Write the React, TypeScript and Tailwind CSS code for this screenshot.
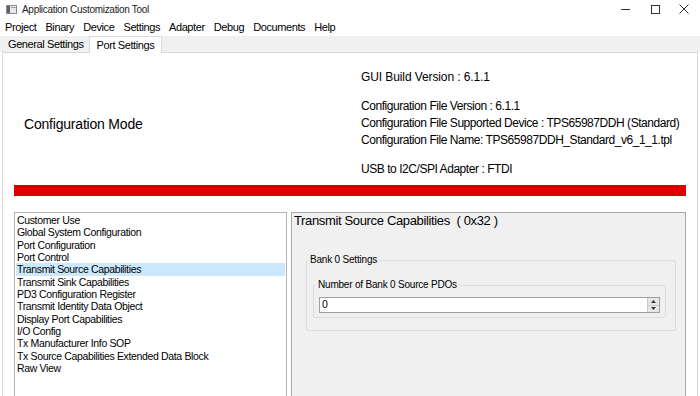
import React from 'react'

const MENU = ['Project', 'Binary', 'Device', 'Settings', 'Adapter', 'Debug', 'Documents', 'Help']

const PAGES = [
  'Customer Use',
  'Global System Configuration',
  'Port Configuration',
  'Port Control',
  'Transmit Source Capabilities',
  'Transmit Sink Capabilities',
  'PD3 Configuration Register',
  'Transmit Identity Data Object',
  'Display Port Capabilities',
  'I/O Config',
  'Tx Manufacturer Info SOP',
  'Tx Source Capabilities Extended Data Block',
  'Raw View',
]

const SELECTED = 'Transmit Source Capabilities'

function AppIcon() {
  return (
    <svg width="11" height="9" viewBox="0 0 11 9">
      <rect x="0.5" y="0.5" width="10" height="8" fill="#e8e8e8" stroke="#8a8a8a" />
      <rect x="1" y="1" width="3" height="7" fill="#5a6470" />
      <rect x="5" y="2" width="5" height="1" fill="#9aa4b0" />
    </svg>
  )
}

export default function App() {
  return (
    <div className="w-[700px] h-[396px] overflow-hidden bg-white flex flex-col text-black" style={{ fontFamily: '"Liberation Sans", Arial, sans-serif' }}>
      {/* Title bar */}
      <div className="h-[18px] flex items-center shrink-0">
        <div className="pl-[6px] pr-[5px] flex items-center">
          <AppIcon />
        </div>
        <span className="text-[10px] tracking-[-0.3px] text-[#222]">Application Customization Tool</span>
        <div className="ml-auto flex items-center h-full">
          <div className="w-[30px] flex justify-center">
            <div className="w-[9px] h-px bg-[#333] mt-[1px]" />
          </div>
          <div className="w-[30px] flex justify-center">
            <div className="w-[9px] h-[9px] border border-[#333]" />
          </div>
          <div className="w-[30px] flex justify-center pr-[2px]">
            <svg width="10" height="10" viewBox="0 0 10 10">
              <path d="M0.5 0.5 L9.5 9.5 M9.5 0.5 L0.5 9.5" stroke="#333" strokeWidth="1" />
            </svg>
          </div>
        </div>
      </div>

      {/* Menu bar */}
      <div className="h-[18px] flex items-center gap-[9px] pl-[5px] text-[11px] tracking-[-0.4px] shrink-0">
        {MENU.map((m) => (
          <span key={m}>{m}</span>
        ))}
      </div>

      {/* Tabs */}
      <div className="h-[16px] bg-[#f0f0f0] flex items-end pl-[2px] shrink-0 relative text-[11px] tracking-[-0.4px]">
        <div className="h-[16px] pl-[6px] pr-[5px] flex items-center">General Settings</div>
        <div className="h-[17px] px-[7px] flex items-center bg-white border border-b-0 border-[#d9d9d9] relative top-[1px]">Port Settings</div>
      </div>

      {/* Content page */}
      <div className="flex-1 bg-white border-l border-r border-t border-[#d9d9d9] mx-[2px] flex flex-col min-h-0">
        {/* Header */}
        <div className="flex pt-[16px]">
          <div className="w-[358px] pl-[21px] flex items-center text-[14px] tracking-[-0.2px] pt-[1px]">Configuration Mode</div>
          <div className="text-[12px] leading-[17px] tracking-[-0.45px] whitespace-nowrap">
            <div className="tracking-[-0.1px]">GUI Build Version : 6.1.1</div>
            <div className="h-[12px]" />
            <div>Configuration File Version : 6.1.1</div>
            <div>Configuration File Supported Device : TPS65987DDH (Standard)</div>
            <div>Configuration File Name: TPS65987DDH_Standard_v6_1_1.tpl</div>
            <div className="h-[12px]" />
            <div>USB to I2C/SPI Adapter : FTDI</div>
          </div>
        </div>

        {/* Red status bar */}
        <div className="h-[11px] bg-[#dd0000] ml-[11px] mr-[11px] mt-[7px] shrink-0" />

        {/* Lower area */}
        <div className="flex flex-1 mt-[16px] ml-[11px] mr-[11px] gap-[4px] min-h-0">
          <div className="w-[273px] border border-[#b4b4b4] border-b-0 bg-white pt-[1px] pl-px pr-px text-[10.5px] tracking-[-0.35px] leading-[12.33px]">
            {PAGES.map((p) => (
              <div key={p} className={`pl-[1px] h-[12.33px] whitespace-nowrap ${p === SELECTED ? 'bg-[#cce8ff]' : ''}`}>
                {p}
              </div>
            ))}
          </div>

          <div className="flex-1 bg-[#f0f0f0] border border-[#a8a8a8] border-b-0 pl-px">
            <div className="text-[13px] leading-[16px] tracking-[-0.35px] pl-px">Transmit Source Capabilities&nbsp;&nbsp;(&nbsp;0x32&nbsp;)</div>
            <fieldset className="border border-[#dcdcdc] rounded-[2px] ml-[13px] mr-[9px] mt-[24px] px-[6px] pt-[4px] pb-[12px]">
              <legend className="ml-[-5px] px-[2px] text-[10px] tracking-[-0.2px] leading-[14px]">Bank 0 Settings</legend>
              <fieldset className="border border-[#dcdcdc] rounded-[2px] mr-[3px] px-[5px] pb-[4px] mt-[7px]">
                <legend className="ml-[-3px] px-[2px] text-[10px] tracking-[-0.2px] leading-[14px]">Number of Bank 0 Source PDOs</legend>
                <div className="mt-[5px] h-[16px] bg-white border border-[#a0a0a0] flex items-center">
                  <span className="pl-[2px] text-[10.5px] flex-1">0</span>
                  <div className="w-[12px] h-full flex flex-col border-l border-[#c8c8c8]">
                    <div className="flex-1 bg-[#e6e6e6] flex items-center justify-center border-b border-[#c8c8c8]">
                      <svg width="5" height="3" viewBox="0 0 5 3"><path d="M2.5 0 L5 3 L0 3 Z" fill="#333" /></svg>
                    </div>
                    <div className="flex-1 bg-[#e6e6e6] flex items-center justify-center">
                      <svg width="5" height="3" viewBox="0 0 5 3"><path d="M0 0 L5 0 L2.5 3 Z" fill="#333" /></svg>
                    </div>
                  </div>
                </div>
              </fieldset>
            </fieldset>
          </div>
        </div>
      </div>
    </div>
  )
}
